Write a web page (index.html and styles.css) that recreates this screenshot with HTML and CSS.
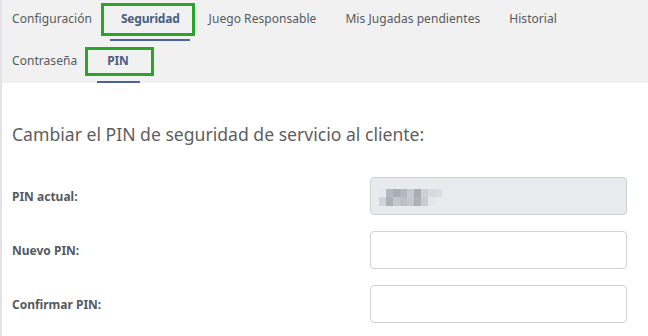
FILE: index.html
```html
<!DOCTYPE html>
<html lang="es">
<head>
<meta charset="utf-8">
<link rel="stylesheet" href="styles.css">
</head>
<body>
<div class="page">
  <nav class="nav">
    <div class="row row-main">
      <span class="tab">Configuración</span>
      <span class="tab tab-active tab-seg">Seguridad</span>
      <span class="tab">Juego Responsable</span>
      <span class="tab">Mis Jugadas pendientes</span>
      <span class="tab">Historial</span>
    </div>
    <div class="row row-sub">
      <span class="tab">Contraseña</span>
      <span class="tab tab-active tab-pin">PIN</span>
    </div>
  </nav>
  <main class="content">
    <h1 class="title">Cambiar el PIN de seguridad de servicio al cliente:</h1>
    <div class="field">
      <label class="label">PIN actual:</label>
      <div class="input input-disabled">
        <svg class="mosaic" width="64" height="17" viewBox="0 0 64 17">
          <rect x="0" y="0" width="7" height="8" fill="#e6e8eb"/>
          <rect x="7" y="0" width="7" height="8" fill="#b4b9c1"/>
          <rect x="14" y="0" width="7" height="8" fill="#a9aeb6"/>
          <rect x="21" y="0" width="7" height="8" fill="#b3b8c0"/>
          <rect x="28" y="0" width="7" height="8" fill="#c6cace"/>
          <rect x="35" y="0" width="7" height="8" fill="#a8acb3"/>
          <rect x="42" y="0" width="7" height="8" fill="#cdd1d6"/>
          <rect x="49" y="0" width="7" height="8" fill="#d6dade"/>
          <rect x="56" y="0" width="7" height="8" fill="#d9dde1"/>
          <rect x="0" y="8" width="7" height="9" fill="#d0d3d7"/>
          <rect x="7" y="8" width="7" height="9" fill="#abb1b9"/>
          <rect x="14" y="8" width="7" height="9" fill="#c3c7cc"/>
          <rect x="21" y="8" width="7" height="9" fill="#bcc1c7"/>
          <rect x="28" y="8" width="7" height="9" fill="#c4c8cd"/>
          <rect x="35" y="8" width="7" height="9" fill="#aeb2b8"/>
          <rect x="42" y="8" width="7" height="9" fill="#c8ccd1"/>
          <rect x="49" y="8" width="7" height="9" fill="#e4e7ea"/>
        </svg>
      </div>
    </div>
    <div class="field">
      <label class="label">Nuevo PIN:</label>
      <div class="input"></div>
    </div>
    <div class="field">
      <label class="label">Confirmar PIN:</label>
      <div class="input"></div>
    </div>
  </main>
</div>
</body>
</html>
```

FILE: styles.css
```css
* { box-sizing: border-box; }
html, body { margin: 0; padding: 0; }
body {
  font-family: "Noto Sans", "DejaVu Sans", sans-serif;
  background: #fff;
  color: #555;
  width: 648px;
  height: 336px;
  overflow: hidden;
}
.page {
  border-left: 2px solid #e2e2e8;
  height: 336px;
}
.nav {
  background: #f1f1f1;
  height: 83px;
  padding-left: 10px;
}
.row {
  display: flex;
  gap: 30px;
  align-items: flex-start;
}
.row-main { height: 41px; padding-top: 11px; gap: 29px; }
.row-sub { height: 42px; padding-top: 12px; gap: 30px; }
.tab {
  font-size: 12px;
  line-height: 16px;
  color: #555a60;
  position: relative;
  white-space: nowrap;
  letter-spacing: 0.05px;
}
.tab-active {
  font-weight: 700;
  color: #4a5d82;
  letter-spacing: -0.2px;
}
.tab-active::before {
  content: "";
  position: absolute;
  border: 3px solid #2aa52a;
}
.tab-active::after {
  content: "";
  position: absolute;
  height: 2px;
  background: #4c6494;
}
.tab-seg::before { left: -20px; right: -15px; top: -8px; bottom: -9px; }
.tab-seg::after { left: -11px; right: -10px; bottom: -14px; }
.tab-pin::before { left: -22px; right: -25px; top: -6px; bottom: -7px; }
.tab-pin::after { left: -10px; right: -11px; bottom: -14px; }

.content {
  padding: 0 21px 0 10px;
}
.title {
  font-size: 17.6px;
  font-weight: 400;
  color: #5e5e5e;
  margin: 0;
  padding-top: 39px;
  height: 94px;
}
.field {
  display: flex;
  align-items: center;
  justify-content: space-between;
  margin-bottom: 16px;
}
.label {
  font-size: 12px;
  font-weight: 700;
  color: #555a5f;
}
.input {
  width: 257px;
  height: 38px;
  border: 1px solid #ced2d8;
  border-radius: 4px;
  background: #fff;
  display: flex;
  align-items: center;
  padding-left: 8px;
}
.input-disabled { background: #e8ebee; }
.mosaic { display: block; margin-top: 2px; }
```
